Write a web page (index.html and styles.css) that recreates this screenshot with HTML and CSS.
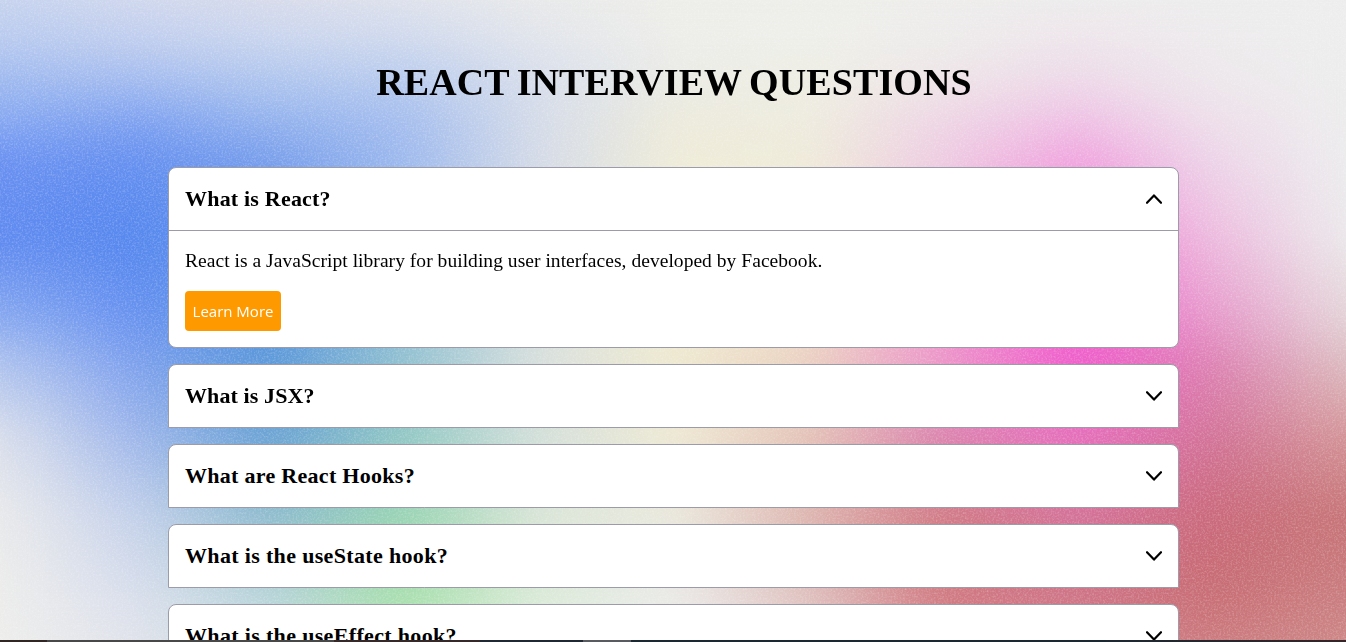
FILE: index.html
```html
<!DOCTYPE html>
<html lang="en">
<head>
<meta charset="utf-8">
<title>React Interview Questions</title>
<link rel="stylesheet" href="styles.css">
</head>
<body>
<div class="mesh" aria-hidden="true">
  <div class="band b0"></div><div class="band b1"></div><div class="band b2"></div><div class="band b3"></div>
  <div class="band b4"></div><div class="band b5"></div><div class="band b6"></div><div class="band b7"></div>
  <div class="band b8"></div><div class="band b9"></div><div class="band b10"></div><div class="band b11"></div>
</div>
<div class="soften" aria-hidden="true"></div>
<svg class="grain" aria-hidden="true">
  <filter id="grain" x="0" y="0" width="100%" height="100%">
    <feTurbulence type="fractalNoise" baseFrequency="0.55" numOctaves="2" seed="4"/>
    <feColorMatrix values="0 0 0 0 1  0 0 0 0 1  0 0 0 0 1  1.2 0 0 0 -0.5"/>
  </filter>
  <rect width="100%" height="100%" filter="url(#grain)"/>
</svg>
<svg class="defs" aria-hidden="true">
  <symbol id="chevron" viewBox="0 0 16 10"><path d="M1 1.2 8 8.6 15 1.2"/></symbol>
</svg>
<main class="page">
  <h1 class="title">REACT INTERVIEW QUESTIONS</h1>
  <div class="list">
    <section class="item open">
      <h2 class="question"><span class="q1">What is React?</span><svg class="chevron"><use href="#chevron"/></svg></h2>
      <div class="answer">
        <p class="text">React is a JavaScript library for building user interfaces, developed by Facebook.</p>
        <button class="more">Learn More</button>
      </div>
    </section>
    <section class="item">
      <h2 class="question"><span class="q2">What is JSX?</span><svg class="chevron"><use href="#chevron"/></svg></h2>
    </section>
    <section class="item">
      <h2 class="question"><span class="q3">What are React Hooks?</span><svg class="chevron"><use href="#chevron"/></svg></h2>
    </section>
    <section class="item">
      <h2 class="question"><span class="q4">What is the useState hook?</span><svg class="chevron"><use href="#chevron"/></svg></h2>
    </section>
    <section class="item">
      <h2 class="question"><span class="q5">What is the useEffect hook?</span><svg class="chevron"><use href="#chevron"/></svg></h2>
    </section>
  </div>
</main>
<div class="strip"></div>
</body>
</html>
```
FILE: styles.css
```css
* { box-sizing: border-box; }
body { margin: 0; height: 642px; overflow: hidden; position: relative; background: #eee; color: #000; font-family: Georgia, "Liberation Serif", serif; }

/* Colour mesh: each band fades in over the one above it */
.mesh { position: absolute; inset: 0; display: grid; grid-template-rows: 40px 40px 40px 40px 80px 80px 36px 80px 80px 80px 46px; }
.band { grid-column: 1; mask-image: linear-gradient(transparent, #000 var(--fade)); }
.b0 { grid-row: 1 / -1; mask-image: none; background: linear-gradient(90deg, #c9d5ef,#d3daee,#dbddeb,#e2e4ec,#eaebea,#eeeeea,#eeeeea,#eeeeec,#edeeed,#eeeeee,#eeeeee); }
.b1 { --fade: 40px; grid-row: 1 / -1; background: linear-gradient(90deg, #b8caef,#c0cdee,#c9d5ee,#ced8ed,#e1e4eb,#edede9,#eeefea,#edebeb,#eee4eb,#edeaec,#eeeeee); }
.b2 { --fade: 40px; grid-row: 2 / -1; background: linear-gradient(90deg, #9fbaef,#a4bdef,#b0c6ee,#b8cbee,#d7deec,#eaebe7,#efefe4,#eee6e7,#eddae9,#ede9ec,#ededed); }
.b3 { --fade: 40px; grid-row: 3 / -1; background: linear-gradient(90deg, #88a9f1,#7da0f1,#93b3ee,#a2bcee,#d6dce8,#edeadb,#edebde,#eed4e5,#efc0e5,#eedeea,#ededed); }
.b4 { --fade: 40px; grid-row: 4 / -1; background: linear-gradient(90deg, #6990f1,#638ff0,#769ceb,#9db9ee,#d5dbe8,#efecd9,#efecda,#eecee3,#f0a2de,#edd5e9,#ecedee); }
.b5 { --fade: 80px; grid-row: 5 / -1; background: linear-gradient(90deg, #5f8af0,#5386ef,#6496e8,#96b8e6,#d8dfe2,#f0eed8,#f2e8d0,#f0b0d6,#f27ad5,#edbade,#ebeaeb); }
.b6 { --fade: 80px; grid-row: 6 / -1; background: linear-gradient(90deg, #8aaaef,#6892f0,#5a96df,#90bfd8,#d5dfde,#f0eed6,#f0dcc8,#f090cf,#f162d0,#e698ca,#e3d4d7); }
.b7 { --fade: 36px; grid-row: 7 / -1; background: linear-gradient(90deg, #acc1ee,#7a9eee,#5997d9,#92c1d0,#dbe0de,#efe9cf,#ead2c2,#ed9bcb,#f058cc,#de83b5,#ddc2c5); }
.b8 { --fade: 80px; grid-row: 8 / -1; background: linear-gradient(90deg, #dce0eb,#9eb6eb,#68a1d4,#91c8c4,#d3dfda,#efead5,#e4c4b8,#da83b0,#e771c0,#d27297,#d49799); }
.b9 { --fade: 80px; grid-row: 9 / -1; background: linear-gradient(90deg, #ebebeb,#c5d1eb,#8ebbcd,#98d5b2,#dbe5d8,#eae9de,#ddb4af,#d07a82,#d37399,#ca687a,#c67476); }
.b10 { --fade: 80px; grid-row: 10 / -1; background: linear-gradient(90deg, #ededeb,#d9deec,#b8d4da,#a6dfaa,#daead8,#ebebe9,#dec2c0,#d07880,#ce7486,#c76c72,#ca7e80); }
.b11 { --fade: 46px; grid-row: 11 / -1; background: linear-gradient(90deg, #eeeeec,#e2e4eb,#c5d9de,#b0e2b4,#deebdc,#ebebe9,#e2c8c6,#d2848a,#d07e8a,#cd7f82,#ce8988); }
.soften { position: absolute; inset: 0; backdrop-filter: blur(20px); }
.grain { position: absolute; inset: 0; width: 100%; height: 100%; opacity: .42; }
.defs { position: absolute; width: 0; height: 0; }

.page { position: relative; width: 1011px; margin-left: 168px; padding-top: 60px; }
.title { margin: 0 0 62px; padding-left: 1px; text-align: center; font-size: 38px; line-height: 45px; letter-spacing: 0.1px; word-spacing: -2px; white-space: nowrap; }
.list { display: flex; flex-direction: column; gap: 16px; }
.item { border: 1px solid #9b9ba9; border-radius: 8px 8px 0 0; background: #fff; }
.item.open { border-radius: 8px; }
.question { display: flex; align-items: center; justify-content: space-between; height: 62px; margin: 0; padding: 0 16px; font-size: 22px; line-height: 28px; letter-spacing: 0.34px; white-space: nowrap; }
.q1 { letter-spacing: 0.2px; }
.q2 { letter-spacing: 0.1px; }
.q3 { letter-spacing: 0.29px; }
.chevron { width: 16px; height: 10px; overflow: visible; fill: none; stroke: #000; stroke-width: 2.2; stroke-linecap: round; stroke-linejoin: round; }
.open .chevron { transform: rotate(180deg); }
.answer { border-top: 1px solid #9b9ba9; padding: 16px; }
.text { margin: 0 0 16px; font-size: 19.5px; line-height: 28px; letter-spacing: 0.04px; white-space: nowrap; }
.more { display: block; width: 96px; height: 40px; border: 0; border-radius: 4px; padding: 0; background: #f90; color: #fff; font: 15px/24px "Segoe UI", "Open Sans", sans-serif; }
.strip { position: absolute; left: 0; right: 0; bottom: 0; height: 2px; background: linear-gradient(90deg, #302725 47px, #484848 47px 334px, #35292a 334px 480px, #202831 480px 583px, #585c60 583px 631px, #1c2831 631px 1100px, #332629); }
```
